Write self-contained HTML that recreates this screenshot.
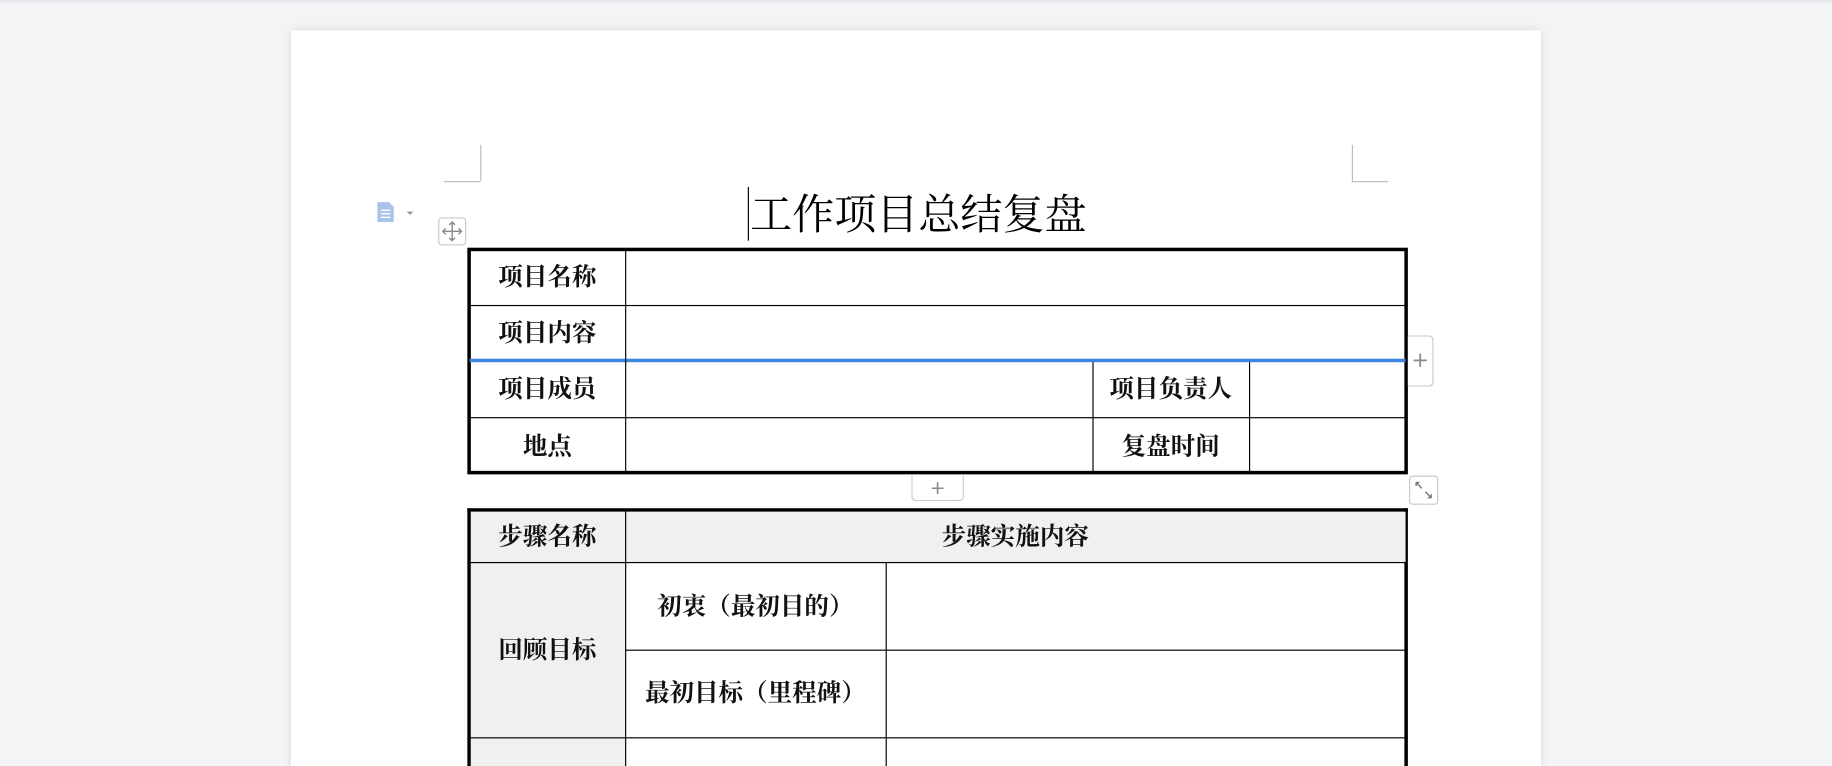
<!DOCTYPE html>
<html><head><meta charset="utf-8"><style>
html,body{margin:0;padding:0;width:1832px;height:766px;overflow:hidden;background:#f3f4f6}
#s{position:absolute;left:0;top:0;width:1568px;height:656px;overflow:hidden;transform:scale(1.16837);transform-origin:0 0;font-family:"Liberation Serif","Noto Serif CJK SC",serif}
.a{position:absolute}
.page{left:249px;top:26px;width:1070px;height:630px;background:#fff;box-shadow:0 0 8px rgba(0,0,0,.12)}
.h{position:absolute;background:#000;height:1px}
.v{position:absolute;background:#000;width:1px}
.t{position:absolute;font-weight:bold;font-size:21px;text-align:center;line-height:26px;color:#111}
.btn{position:absolute;border:1px solid #c8c8c8;border-radius:3px;background:#fff;color:#888;text-align:center;font-family:"DejaVu Sans",sans-serif}
</style></head><body><div id="s">
<div class="a" style="left:0;top:0;width:1568px;height:2px;background:#e6e7ea"></div>
<div class="a page"></div>
<div class="a" style="left:411px;top:124px;width:1px;height:31px;background:#bbb"></div>
<div class="a" style="left:380px;top:155px;width:31px;height:1px;background:#bbb"></div>
<div class="a" style="left:1157px;top:124px;width:1px;height:31px;background:#bbb"></div>
<div class="a" style="left:1157px;top:155px;width:31px;height:1px;background:#bbb"></div>
<svg class="a" style="left:322px;top:172px" width="34" height="20"><path d="M1 1h10l4 4v13H1z" fill="#a9c3ea"/><path d="M4 8h8M4 11h8M4 14h8" stroke="#fff" stroke-width="1.2"/><path d="M26 9h6l-3 3z" fill="#999"/></svg>
<div class="btn" style="left:375px;top:186px;width:22px;height:22px">
<svg width="22" height="22"><path d="M11 3v16M3 11h16M8.5 5.5L11 3l2.5 2.5M8.5 16.5L11 19l2.5-2.5M5.5 8.5L3 11l2.5 2.5M16.5 8.5L19 11l-2.5 2.5" stroke="#888" fill="none" stroke-width="1.2"/></svg></div>
<div class="a" style="left:640px;top:160px;width:1px;height:46px;background:#000"></div>
<div class="a" style="left:642px;top:161px;font-size:36px;line-height:46px;color:#000">工作项目总结复盘</div>
<div class="a" style="left:400px;top:212px;width:799px;height:188px;border:3px solid #000"></div>
<div class="h" style="left:402px;top:261px;width:801px"></div>
<div class="h" style="left:402px;top:357px;width:801px"></div>
<div class="a" style="left:402px;top:307px;width:801px;height:3px;background:#3d86e0"></div>
<div class="v" style="left:535px;top:214px;height:191px"></div>
<div class="v" style="left:935px;top:310px;height:95px"></div>
<div class="v" style="left:1069px;top:310px;height:95px"></div>
<div class="t" style="left:402px;top:224px;width:133px">项目名称</div>
<div class="t" style="left:402px;top:272px;width:133px">项目内容</div>
<div class="t" style="left:402px;top:320px;width:133px">项目成员</div>
<div class="t" style="left:402px;top:369px;width:133px">地点</div>
<div class="t" style="left:935px;top:320px;width:134px">项目负责人</div>
<div class="t" style="left:935px;top:369px;width:134px">复盘时间</div>
<div class="btn" style="left:1205px;top:287px;width:21px;height:42px;line-height:42px;font-size:18px;border-left:none;border-radius:0 4px 4px 0">+</div>
<div class="btn" style="left:780px;top:407px;width:43px;height:21px;line-height:21px;font-size:16px;border-top:none;border-radius:0 0 4px 4px">+</div>
<div class="btn" style="left:1206px;top:407px;width:23px;height:23px"><svg width="23" height="23"><path d="M5 5l5 5M5 5v3M5 5h3M18 18l-5-5M18 18v-3M18 18h-3" stroke="#777" fill="none" stroke-width="1.2"/></svg></div>
<div class="a" style="left:400px;top:435px;width:799px;height:218px;border:3px solid #000;border-bottom:none;background:#fff"></div>
<div class="a" style="left:403px;top:438px;width:800px;height:43px;background:#f0f0f0"></div>
<div class="a" style="left:403px;top:481px;width:132px;height:175px;background:#f0f0f0"></div>
<div class="h" style="left:402px;top:481px;width:801px"></div>
<div class="h" style="left:535px;top:556px;width:668px"></div>
<div class="h" style="left:402px;top:631px;width:801px"></div>
<div class="v" style="left:535px;top:437px;height:219px"></div>
<div class="v" style="left:758px;top:481px;height:175px"></div>
<div class="t" style="left:402px;top:446px;width:133px">步骤名称</div>
<div class="t" style="left:535px;top:446px;width:668px">步骤实施内容</div>
<div class="t" style="left:402px;top:543px;width:133px">回顾目标</div>
<div class="t" style="left:535px;top:506px;width:223px">初衷（最初目的）</div>
<div class="t" style="left:535px;top:580px;width:223px">最初目标（里程碑）</div>
</div></body></html>
